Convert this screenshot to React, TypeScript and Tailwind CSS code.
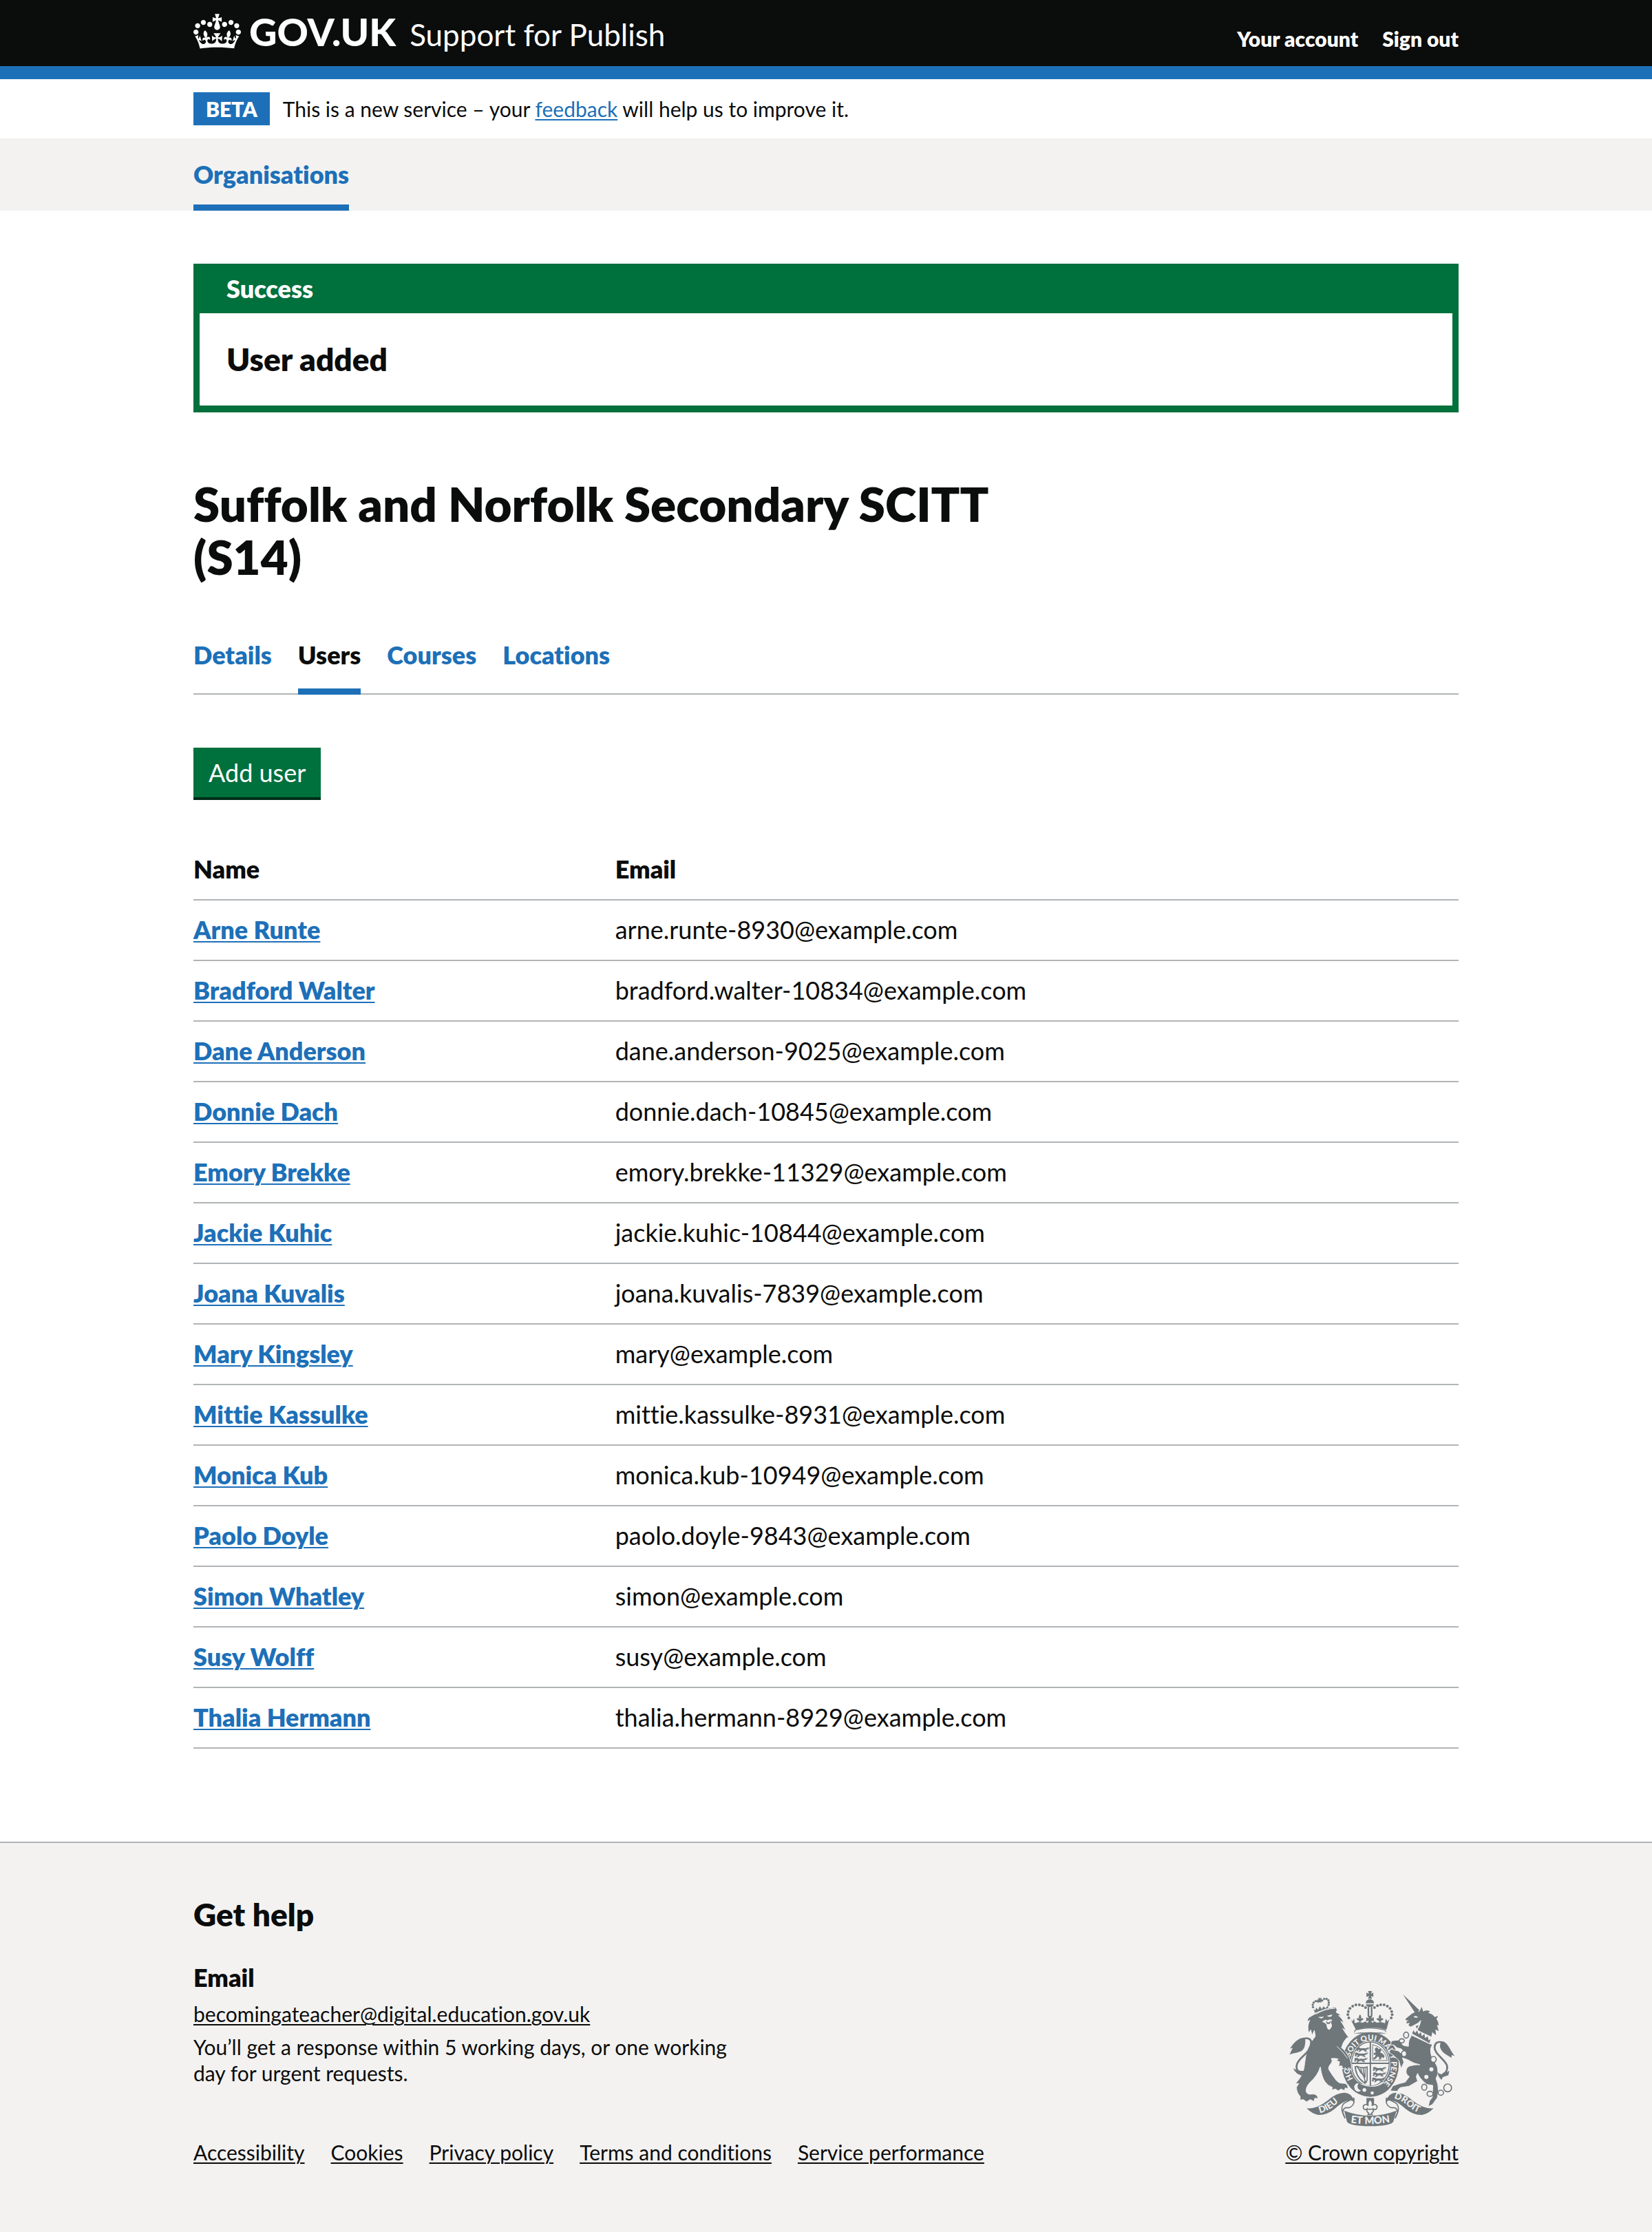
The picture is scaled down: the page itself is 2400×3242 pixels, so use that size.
import React from "react";

const users: { name: string; email: string }[] = [
  { name: "Arne Runte", email: "arne.runte-8930@example.com" },
  { name: "Bradford Walter", email: "bradford.walter-10834@example.com" },
  { name: "Dane Anderson", email: "dane.anderson-9025@example.com" },
  { name: "Donnie Dach", email: "donnie.dach-10845@example.com" },
  { name: "Emory Brekke", email: "emory.brekke-11329@example.com" },
  { name: "Jackie Kuhic", email: "jackie.kuhic-10844@example.com" },
  { name: "Joana Kuvalis", email: "joana.kuvalis-7839@example.com" },
  { name: "Mary Kingsley", email: "mary@example.com" },
  { name: "Mittie Kassulke", email: "mittie.kassulke-8931@example.com" },
  { name: "Monica Kub", email: "monica.kub-10949@example.com" },
  { name: "Paolo Doyle", email: "paolo.doyle-9843@example.com" },
  { name: "Simon Whatley", email: "simon@example.com" },
  { name: "Susy Wolff", email: "susy@example.com" },
  { name: "Thalia Hermann", email: "thalia.hermann-8929@example.com" },
];

const tabs = [
  { label: "Details", current: false },
  { label: "Users", current: true },
  { label: "Courses", current: false },
  { label: "Locations", current: false },
];

const footerLinks = [
  "Accessibility",
  "Cookies",
  "Privacy policy",
  "Terms and conditions",
  "Service performance",
];

const container = "mx-auto w-full max-w-[1838px]";
const underlined = "underline decoration-2 underline-offset-[3px]";

function Crown() {
  return (
    <svg aria-hidden="true" viewBox="0 0 132 97" className="h-[51px] w-[69px] shrink-0 fill-white">
      <path d="M25 30.2c3.5 1.5 7.7-.2 9.1-3.7 1.5-3.6-.2-7.8-3.9-9.2-3.6-1.4-7.6.3-9.1 3.9-1.4 3.5.3 7.5 3.9 9zM9 39.5c3.6 1.5 7.8-.2 9.2-3.7 1.5-3.6-.2-7.8-3.9-9.1-3.6-1.5-7.6.2-9.1 3.8-1.4 3.5.3 7.5 3.8 9zM4.4 57.2c3.5 1.5 7.7-.2 9.1-3.8 1.5-3.6-.2-7.7-3.9-9.1-3.5-1.5-7.6.3-9.1 3.8-1.4 3.5.3 7.6 3.9 9.1zm38.3-21.4c3.5 1.5 7.7-.2 9.1-3.8 1.5-3.6-.2-7.7-3.9-9.1-3.6-1.5-7.6.3-9.1 3.8-1.3 3.6.4 7.7 3.9 9.1zm64.4-5.6c-3.6 1.5-7.8-.2-9.1-3.7-1.5-3.6.2-7.8 3.8-9.2 3.6-1.4 7.7.3 9.2 3.9 1.3 3.5-.4 7.5-3.9 9zm15.9 9.3c-3.6 1.5-7.7-.2-9.1-3.7-1.5-3.6.2-7.8 3.7-9.1 3.6-1.5 7.7.2 9.2 3.8 1.5 3.5-.3 7.5-3.8 9zm4.7 17.7c-3.6 1.5-7.8-.2-9.2-3.8-1.5-3.6.2-7.7 3.9-9.1 3.6-1.5 7.7.3 9.2 3.8 1.3 3.5-.4 7.6-3.9 9.1zM89.3 35.8c-3.6 1.5-7.8-.2-9.2-3.8-1.4-3.6.2-7.7 3.9-9.1 3.6-1.5 7.7.3 9.2 3.8 1.4 3.6-.3 7.7-3.9 9.1zM69.7 17.7l8.9 4.7V9.3l-8.9 2.8c-.2-.3-.5-.6-.9-.9L72.4 0H59.6l3.5 11.2c-.3.3-.6.5-.9.9l-8.8-2.8v13.1l8.8-4.7c.3.3.6.7.9.9l-5 15.4v.1c-.2.8-.4 1.6-.4 2.4 0 4.1 3.1 7.5 7 8.1h.2c.3 0 .7.1 1 .1.4 0 .7 0 1-.1h.2c4-.6 7.1-4.1 7.1-8.1 0-.8-.1-1.7-.4-2.4V34l-5.1-15.4c.4-.2.7-.6 1-.9zM66 92.8c16.9 0 32.8 1.1 47.1 3.2 4-16.9 8.9-26.7 14-33.5l-9.6-3.4c1 4.9 1.1 7.2 0 10.2-1.5-1.4-3-4.3-4.2-8.7L108.6 76c2.8-2 5-3.2 7.5-3.3-4.4 9.4-10 11.9-13.6 11.2-4.3-.8-6.3-4.6-5.6-7.9 1-4.7 5.7-5.9 8-.5 4.3-8.7-3-11.4-7.6-8.8 7.1-7.2 7.9-13.5 2.1-21.1-8 6.1-8.1 12.3-4.5 20.8-4.7-5.4-12.1-2.5-9.5 6.2 3.4-5.2 7.9-2 7.2 3.1-.6 4.3-6.4 7.8-13.5 7.2-10.3-.9-10.9-8-11.2-13.8 2.5-.5 7.1 1.8 11 7.3L80.2 60c-4.1 4.4-8 5.3-12.3 5.4 1.4-4.4 8-11.6 8-11.6H55.5s6.4 7.2 7.9 11.6c-4.2-.1-8-1-12.3-5.4l1.4 16.4c3.9-5.5 8.5-7.7 10.9-7.3-.3 5.8-.9 12.8-11.1 13.8-7.2.6-12.9-2.9-13.5-7.2-.7-5 3.8-8.3 7.1-3.1 2.7-8.7-4.6-11.6-9.4-6.2 3.7-8.5 3.6-14.7-4.6-20.8-5.8 7.6-5 13.9 2.2 21.1-4.7-2.6-11.9.1-7.7 8.8 2.3-5.5 7.1-4.2 8.1.5.7 3.3-1.3 7.1-5.7 7.9-3.5.7-9-1.8-13.5-11.2 2.5.1 4.7 1.3 7.5 3.3l-4.7-15.4c-1.2 4.4-2.7 7.2-4.3 8.7-1.1-3-.9-5.3 0-10.2l-9.5 3.4c5 6.9 9.9 16.7 14 33.6 14.8-2.1 30.8-3.2 47.7-3.2z" />
    </svg>
  );
}

const G = "#6f777b";
const W = "#f3f2f1";

/* Half of the pearls on the central crown; the other half is mirrored. */
const pearls = [
  [403, 141], [390, 133], [376, 129], [361, 129], [347, 135],
  [335, 145], [328, 158], [326, 172], [330, 186],
];
const lionPearls = [
  [174, 139], [173, 129], [177, 119], [186, 113], [195, 114], [214, 110],
  [223, 103], [233, 103], [241, 109], [243, 119], [242, 129],
];

function PassantLion({ x, y }: { x: number; y: number }) {
  return (
    <g transform={`translate(${x} ${y})`}>
      <path
        d="M0 3l6-5 8 1 7 4 12-1 10 1 8-5 3 3-6 7-6 2 7 6-6 1-8-6-12 1-6 6-7 1 5-8-5-3-5 5-5-1 4-6z"
        fill={G}
      />
      <path d="M50 6c6 0 8-4 7-9M2 13h8M34 14h10" stroke={G} strokeWidth="3" fill="none" />
    </g>
  );
}

function Fleur({ x, y }: { x: number; y: number }) {
  return (
    <path
      transform={`translate(${x} ${y})`}
      d="M0-17c6 7 7 12 3 19 5-6 12-4 11 3-1 4-5 4-7 2 0 5-3 8-7 9-4-1-7-4-7-9-2 2-6 2-7-2-1-7 6-9 11-3-4-7-3-12 3-19z"
    />
  );
}

function RoyalArms() {
  return (
    <svg aria-hidden="true" viewBox="68 66 728 594" className="h-[198px] w-[243px]">
      <defs>
        <path id="garter" d="M349 452A92 106 0 1 1 474 478" />
        <path id="dieu" d="M204 601Q240 593 268 568T312 538" />
        <path id="mon" d="M338 643Q422 655 510 641" />
        <path id="droit" d="M526 537Q560 544 590 572T656 603" />
      </defs>

      {/* Central crown */}
      <g fill={G}>
        <path d="M414 69h17l-4 12 10-5v19l-10-5 4 13h-17l4-13-11 5V76l11 5z" />
        <path d="M404 122c0-10 8-17 18-17s18 7 18 17zM404 127h36c-1 7-7 12-18 12s-17-5-18-12z" />
        <path d="M412 139h7v38h-7zM426 139h7v38h-7z" />
        {pearls.map(([x, y]) => (
          <g key={`${x}-${y}`}>
            <circle cx={x} cy={y} r="6" />
            <circle cx={845 - x} cy={y} r="6" />
          </g>
        ))}
        <Fleur x={379} y={188} />
        <Fleur x={466} y={188} />
        <path d="M412 177h21l-5 11 11-5v19l-11-5 4 11h-19l4-11-11 5v-19l11 5z" />
        <path d="M337 190l8 12 8-13 3 20 18-5 18 3 10-6 8 6h24l8-6 10 6 18-3 18 5 3-20 8 13 8-12-13 48q-65-20-133 0z" />
      </g>
      <path d="M362 238q60-16 122 0 9 3 6 14H356q-3-11 6-14z" fill={W} stroke={G} strokeWidth="4" />

      {/* Garter */}
      <ellipse cx="424" cy="389" rx="124" ry="141" fill={G} />
      <path d="M356 246q68-22 135 0l4 8q-72-18-142 0z" fill={W} />
      <ellipse cx="424" cy="387" rx="87" ry="101" fill={W} />
      <ellipse cx="424" cy="387" rx="82" ry="96" fill="none" stroke={G} strokeWidth="4" />
      <text fontFamily="Lato, sans-serif" fontWeight="900" fontSize="34" fill={W}>
        <textPath href="#garter">HONI SOIT QUI MAL Y PENSE</textPath>
      </text>
      <path d="M352 482q12-20 26-10-12 6-6 20 4 10 18 4-8 18-26 12-14-8-12-26z" fill={W} stroke={G} strokeWidth="4" />
      <path d="M384 476q50 22 98-8l22 24q-42 40-118 22-10-16-2-38z" fill={G} />
      <path d="M386 474q50 24 98-8" stroke={W} strokeWidth="4" fill="none" />
      <circle cx="398" cy="500" r="8" fill={W} />
      <circle cx="432" cy="513" r="7" fill={W} />

      {/* Quartered shield */}
      <path d="M421 291h6v192h-6zM342 381h164v6H342z" fill={G} />
      <PassantLion x={362} y={316} />
      <PassantLion x={355} y={339} />
      <PassantLion x={353} y={362} />
      <PassantLion x={434} y={402} />
      <PassantLion x={434} y={425} />
      <PassantLion x={430} y={448} />
      <path d="M434 302q56 16 64 70h-64z" fill="none" stroke={G} strokeWidth="3" />
      <path
        d="M444 318l10-4 5 8 10-2 3 10-6 6 12 6 8 10-4 10-8-6-4 10-10 2 4-8-8-6-8 10-10 4-2-6 8-6 4-10-8 2-2-8 10-4-4-8z"
        fill={G}
      />
      <path d="M362 396q28 12 48 4v58l-8 10q-4-40-40-72z" fill="none" stroke={G} strokeWidth="5" />
      <path d="M372 403q4 18 16 28M382 404q3 20 12 36M392 404q2 20 8 44M401 403v40" stroke={G} strokeWidth="4" fill="none" />
      <path d="M358 396q2 48 42 74l8-6" stroke={G} strokeWidth="6" fill="none" />

      {/* Lion */}
      <g fill={G}>
        <path d="M176 148l8 6 4-13 8 10 8-16 8 13 9-13 6 10 12-12 3 18q-31 0-59 13z" />
        {lionPearls.map(([x, y]) => (
          <circle key={`${x}-${y}`} cx={x} cy={y} r="5" />
        ))}
        <path d="M198 97l7 4 6-5-1 10 8 2-8 4 1 8-7-3-6 4v-9l-8-4 8-3z" />
        <path
          stroke={W}
          strokeWidth="3"
          d="M167 178q50-34 107-39l5 13-4 10q14 4 22 16l-12-3q18 14 24 34l-14-9q14 18 22 42l-14-10q16 26 29 42l-10-2q-18 18-24 44 24 18 38 52 10 28 2 46l-8-12-6 14-8-13-12 6-4-14-14 2 4-20-14-4 8-8q-14-4-30-2 8 12-2 22-12 14-10 24 12 22 34 50 12 14 28 12 24-2 22 24l-12-4-2 12-16-7-12 8-12-8-16 4 2-12q-20-6-32-24-14-20-20-64-12 38-44 66-20 20-18 42 6 14 26 10 24-2 26 20l-14-2-4 14-16-8-16 10-14-10-14 2 0-16q-16-16-16-40l10-16-14 0q38-40 40-90 6-70 46-116-2-16-4-26l-10 22-6-24-8 14q-10-28 4-56l-12 8q2-14 8-20z"
        />
        <path d="M134 272c-24 0-48 26-60 48l12-4-14 30c24-12 58-4 66-38 4-20 4-34-4-36z" />
        <path d="M88 406q22 14 54 10l-10 22q-34-4-44-32z" />
      </g>
      <path
        d="M124 424q-28-6-20-36c12-36 62-48 62-96 0-16-18-20-30-16"
        fill="none"
        stroke={G}
        strokeWidth="8"
      />
      <path d="M186 170q40-24 86-26" stroke={W} strokeWidth="3" fill="none" />
      <path d="M196 182l26-1q-8 14-26 1zM234 177l24-6q-4 18-24 6z" fill={W} />
      <path d="M214 203q12-14 24-6 10-8 20-1l-6 8 5 16q-6 18-15 18-9-6-9-22l-6-7z" fill={W} />
      <path d="M229 199l12 8 12-9-6 14h-12z" fill={G} />
      <path d="M278 310q30 26 46 52" stroke={W} strokeWidth="3" fill="none" />

      {/* Unicorn */}
      <g fill={G}>
        <path d="M566 83l72 70-17 14z" />
        <path d="M578 190l24-20q16-12 36-12l10-20 6 20q18-8 30 0l-8 6q20 4 28 18l16-4-8 12q10 14 10 30l-8-4 8 28-14-8 2 26-16-14-4 20-54-26q-12-8-14-22 18 4 24-26-14 16-30 22l-16 8-10-6 6-10-14 2 0-8 10-4-14-2z" />
        <path
          stroke={W}
          strokeWidth="3"
          d="M596 254l98 48q-12 18-6 40l8 28q20 18 22 44 2 22-8 36l8 26q6 30-2 58l-22 30-18 8 6-24 12-16 2-52-26-4q-32-26-40-48l-6 14 6 20-38 22-38 6q-10 8-12 16l-32-2 12-22 30-10 24-6 18-24q-12-6-14-18-2-20 14-28 28-8 46-6-26-4-54-22l-22-8 6 20-12 26-10-34-20-20-22-16 6-14 34 8 24 20 8-4-18-24-20-6-14-12-14 0 4-18 30-4 22 24 22 4q-2-26 12-44z"
        />
        <path d="M736 288c26 2 34 38 56 64l-14-4 0 12c-20-14-42-20-50-46q-2-20 8-26z" />
        <path d="M716 420q12 18 30 8l22-12-4 20-24 8-6 12q-16-14-18-36z" />
      </g>
      <path
        d="M736 292q-30-6-32 22c0 32 46 52 54 80 4 20-6 34-20 38"
        fill="none"
        stroke={G}
        strokeWidth="8"
      />
      <path d="M612 180q10-6 20 2-10 8-20-2z" fill={W} />
      <path d="M606 228l14 16q16-14 22-44" stroke={W} strokeWidth="5" fill="none" />
      <path d="M606 238l88 42-8 22-88-42z" fill={W} />
      <path d="M606 254l6-14 8 12 8-12 6 18 10-10 4 18 12-10 2 18 12-8 4 18 8-6-4 18z" fill={G} />
      <g fill={W} stroke={G} strokeWidth="5">
        <ellipse cx="580" cy="261" rx="11" ry="13" />
        <ellipse cx="561" cy="286" rx="11" ry="9" />
        <ellipse cx="571" cy="342" rx="11" ry="13" />
        <ellipse cx="699" cy="367" rx="12" ry="13" />
        <ellipse cx="659" cy="488" rx="11" ry="13" />
        <ellipse cx="684" cy="517" rx="13" ry="11" />
        <ellipse cx="731" cy="512" rx="12" ry="11" />
        <circle cx="761" cy="491" r="17" />
      </g>
      <circle cx="690" cy="410" r="9" fill={W} />
      <circle cx="668" cy="443" r="9" fill={W} />

      {/* Motto ribbon */}
      <g fill={W} stroke={G} strokeWidth="5">
        <path d="M352 536q6 34-24 42-22-6-24 20l10 26q-14-28-14-40-2-22 20-32z" />
        <path d="M494 536q-6 34 24 42 22-6 24 20l-10 26q14-28 14-40 2-22-20-32z" />
      </g>
      <g fill={G}>
        <path d="M146 580q44 4 92-34 40-36 76-34 34 4 41 46-10-20-40-8-20 8-46 32-34 28-72 27-26-4-51-29z" />
        <path d="M700 580q-44 4-92-34-40-36-76-34-34 4-41 46 10-20 40-8 20 8 46 32 34 28 72 27 26-4 51-29z" />
        <path d="M310 590q113 44 228 0l-14 48q-10 18-100 20-92-2-102-20z" />
      </g>
      <g fontFamily="Lato, sans-serif" fontWeight="900" fill={W}>
        <text fontSize="40">
          <textPath href="#dieu">DIEU</textPath>
        </text>
        <text fontSize="44">
          <textPath href="#mon">ET MON</textPath>
        </text>
        <text fontSize="40">
          <textPath href="#droit">DROIT</textPath>
        </text>
      </g>
      <path d="M407 535h33v34h-33z" fill={G} />
      <g fill={W} stroke={G} strokeWidth="5">
        <path d="M423 541c12 12 12 20 8 28 8-10 24-6 22 8-2 10-12 10-16 6 2 12-4 16-8 18l3 6h-18l3-6c-4-2-10-6-8-18-4 4-14 4-16-6-2-14 14-18 22-8-4-8-4-16 8-28z" />
        <path d="M406 584h34" />
      </g>
    </svg>
  );
}

export default function App() {
  return (
    <div className="bg-[#f3f2f1] font-['Lato',sans-serif] text-[30px] leading-[38px] text-[#0b0c0c] [font-variant-ligatures:none]">
      <header className="border-b-[19px] border-[#1d70b8] bg-[#0b0c0c] pb-[5px] text-white">
        <div className={`${container} flex h-[91px] items-center justify-between`}>
          <a href="#home" className="flex items-center gap-3">
            <Crown />
            <span className="flex items-baseline gap-5">
              <span className="text-[56px] leading-[60px] font-black">GOV.UK</span>
              <span className="text-[44px] leading-none">Support for Publish</span>
            </span>
          </a>
          <nav aria-label="Account" className="flex gap-[35px] pt-[21px] font-extrabold">
            <a href="#account">Your account</a>
            <a href="#sign-out">Sign out</a>
          </nav>
        </div>
      </header>

      <div className="bg-white py-[19px]">
        <div className={`${container} flex items-center gap-[19px]`}>
          <strong className="bg-[#1d70b8] px-[18px] leading-[48px] font-extrabold text-white">BETA</strong>
          <p>
            This is a new service – your{" "}
            <a href="#feedback" className={`${underlined} text-[#1d70b8]`}>
              feedback
            </a>{" "}
            will help us to improve it.
          </p>
        </div>
      </div>

      <nav aria-label="Primary" className="text-[36px] leading-[48px]">
        <div className={`${container} flex`}>
          <a
            href="#organisations"
            className="border-b-[9px] border-[#1d70b8] pt-7 pb-5 font-extrabold text-[#1d70b8]"
          >
            Organisations
          </a>
        </div>
      </nav>

      <main className="bg-white pt-[77px] pb-[135px] text-[36px] leading-[48px]">
        <div className={container}>
          <section aria-labelledby="notice-title" className="border-x-[9px] border-b-[10px] border-[#00703c]">
            <h2 id="notice-title" className="bg-[#00703c] px-[39px] py-3 font-extrabold text-white">
              Success
            </h2>
            <p className="px-[39px] py-[38px] text-[46px] leading-[58px] font-extrabold">User added</p>
          </section>

          <h1 className="mt-[94px] max-w-[1225px] text-[69px] leading-[77px] font-extrabold">
            Suffolk and Norfolk Secondary SCITT (S14)
          </h1>

          <nav aria-label="Provider" className="mt-20 border-b-2 border-[#b1b4b6]">
            <ul className="-mb-[2px] flex gap-[38px] font-extrabold">
              {tabs.map((tab) => (
                <li key={tab.label}>
                  <a
                    href={`#${tab.label.toLowerCase()}`}
                    aria-current={tab.current ? "page" : undefined}
                    className={
                      tab.current
                        ? "block border-b-[9px] border-[#1d70b8] pb-[25px]"
                        : "block pb-[34px] text-[#1d70b8]"
                    }
                  >
                    {tab.label}
                  </a>
                </li>
              ))}
            </ul>
          </nav>

          <button
            type="button"
            className="mt-[77px] block border-b-4 border-[#002d18] bg-[#00703c] px-[22px] py-3 text-white"
          >
            Add user
          </button>

          <table className="mt-[58px] w-full table-fixed border-separate border-spacing-0 text-left">
            <thead>
              <tr>
                <th scope="col" className="w-1/3 border-b-2 border-[#b1b4b6] pt-[18px] pb-5 font-extrabold">
                  Name
                </th>
                <th scope="col" className="border-b-2 border-[#b1b4b6] pt-[18px] pb-5 font-extrabold">
                  Email
                </th>
              </tr>
            </thead>
            <tbody>
              {users.map((user) => (
                <tr key={user.email}>
                  <th scope="row" className="border-b-2 border-[#b1b4b6] pt-[18px] pb-5 font-extrabold">
                    <a href={`#${user.email}`} className={`${underlined} text-[#1d70b8]`}>
                      {user.name}
                    </a>
                  </th>
                  <td className="border-b-2 border-[#b1b4b6] pt-[18px] pb-5">{user.email}</td>
                </tr>
              ))}
            </tbody>
          </table>
        </div>
      </main>

      <footer className="border-t-2 border-[#b1b4b6] pt-[75px] pb-[97px]">
        <div className={`${container} flex items-end justify-between`}>
          <div>
            <h2 className="text-[46px] leading-[58px] font-extrabold">Get help</h2>
            <h3 className="mt-[38px] text-[36px] leading-[48px] font-extrabold">Email</h3>
            <p className="mt-[10px]">
              <a href="mailto:becomingateacher@digital.education.gov.uk" className={underlined}>
                becomingateacher@digital.education.gov.uk
              </a>
            </p>
            <p className="mt-[10px] max-w-[800px]">
              You’ll get a response within 5 working days, or one working day for urgent requests.
            </p>
            <ul className="mt-[77px] flex flex-wrap gap-x-[38px]">
              {footerLinks.map((link) => (
                <li key={link}>
                  <a href="#footer" className={underlined}>
                    {link}
                  </a>
                </li>
              ))}
            </ul>
          </div>
          <a href="#copyright" className="flex flex-col items-center gap-[18px]">
            <RoyalArms />
            <span className={underlined}>© Crown copyright</span>
          </a>
        </div>
      </footer>
    </div>
  );
}
